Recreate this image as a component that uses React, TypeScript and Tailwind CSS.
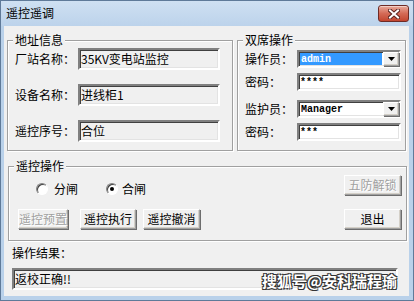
import React from 'react';

// Classic Win32-style bevels
const sunken =
  'border-2 border-t-[#808080] border-l-[#808080] border-r-white border-b-white shadow-[inset_1px_1px_0_#404040,inset_-1px_-1px_0_#e3e3e3]';
const raised =
  'border border-t-white border-l-white border-r-[#a0a0a0] border-b-[#a0a0a0] shadow-[inset_-1px_-1px_0_#d4d0c8,1px_1px_0_#6d6d6d]';
const etched =
  'border border-[#a0a0a0] shadow-[inset_1px_1px_0_#ffffff,1px_1px_0_#ffffff]';

const GroupBox = ({ title, className, children }: { title: string; className: string; children: React.ReactNode }) => (
  <div className={`relative ${etched} ${className}`}>
    <span className="absolute left-[5px] top-[-8px] bg-[#f0f0f0] px-[2px] leading-[14px]">{title}</span>
    {children}
  </div>
);

const Button = ({ label, width, disabled }: { label: string; width: string; disabled?: boolean }) => (
  <button
    className={`${width} h-[20px] ${raised} bg-[#f0f0f0] flex items-center justify-center leading-[14px] ${
      disabled ? 'text-[#a0a0a0] [text-shadow:1px_1px_0_#ffffff]' : 'text-black'
    }`}
  >
    {label}
  </button>
);

const Radio = ({ checked }: { checked?: boolean }) => (
  <span className="w-[12px] h-[12px] rounded-full border border-t-[#808080] border-l-[#808080] border-r-white border-b-white bg-white shadow-[inset_1px_1px_0_#404040] flex items-center justify-center">
    {checked && <span className="w-[4px] h-[4px] rounded-full bg-black" />}
  </span>
);

const ComboBox = ({ value, selected }: { value: string; selected?: boolean }) => (
  <div className={`w-[104px] h-[18px] ${sunken} bg-white flex items-stretch`}>
    <div className="flex-1 p-[1px] flex">
      <span
        className={`flex-1 flex items-center pl-[1px] font-['Liberation_Mono',monospace] text-[10px] font-bold ${
          selected ? 'bg-[#3399ff] text-white' : 'text-black'
        }`}
      >
        {value}
      </span>
    </div>
    <div className={`w-[16px] ${raised} bg-[#f0f0f0] flex items-center justify-center`}>
      <svg width="7" height="4" viewBox="0 0 7 4">
        <path d="M0 0h7L3.5 4z" fill="#000" />
      </svg>
    </div>
  </div>
);

const App = () => {
  return (
    <div className="relative w-[414px] h-[301px] bg-[#b9d1ea] border border-[#5f7a99] flex flex-col font-['Noto_Sans_CJK_SC','Liberation_Sans',sans-serif] text-[12px] text-black overflow-hidden">
      {/* Title bar */}
      <div className="h-[25px] flex items-start pl-[5px] bg-gradient-to-b from-[#cfe0f2] to-[#bcd3eb]">
        <span className="mt-[5px] leading-[14px]">遥控遥调</span>
        <button className="ml-auto mr-[4px] mt-[4px] w-[31px] h-[17px] rounded-[3px] border border-[#6e2b26] bg-gradient-to-b from-[#e7a99b] via-[#d46a56] to-[#c2452f] flex items-center justify-center shadow-[inset_0_1px_0_#f3cfc6]">
          <svg width="12" height="10" viewBox="0 0 12 10">
            <path d="M2 1.5l8 7M10 1.5l-8 7" stroke="#5a2420" strokeWidth="4" strokeLinecap="square" />
            <path d="M2 1.5l8 7M10 1.5l-8 7" stroke="#ffffff" strokeWidth="2" strokeLinecap="square" />
          </svg>
        </button>
      </div>

      {/* Client area */}
      <div className="h-[270px] ml-[3px] mr-[4px] bg-[#f0f0f0] flex flex-col">
        <div className="flex pl-[3px] pt-[14px] gap-[4px]">
          {/* 地址信息 */}
          <GroupBox title="地址信息" className="w-[226px] h-[111px] pt-[7px] pl-[7px] flex flex-col gap-[14px]">
            {[
              ['厂站名称：', '35KV变电站监控'],
              ['设备名称：', '进线柜1'],
              ['遥控序号：', '合位'],
            ].map(([label, value]) => (
              <div key={label} className="h-[22px] flex items-center">
                <span className="w-[63px] leading-[14px]">{label}</span>
                <div className={`w-[142px] h-[22px] ${sunken} bg-[#f0f0f0] flex items-center pl-[1px] leading-[14px]`}>
                  {value}
                </div>
              </div>
            ))}
          </GroupBox>

          {/* 双席操作 */}
          <GroupBox title="双席操作" className="w-[169px] h-[111px] pt-[9px] pl-[7px] flex flex-col">
            <div className="h-[18px] flex items-center">
              <span className="w-[52px] leading-[14px]">操作员：</span>
              <ComboBox value="admin" selected />
            </div>
            <div className="h-[18px] mt-[5px] flex items-center">
              <span className="w-[52px] leading-[14px]">密码：</span>
              <div className={`w-[104px] h-[18px] ${sunken} bg-white flex items-center pl-[1px] font-['Liberation_Mono',monospace] text-[10px] font-bold`}>
                ****
              </div>
            </div>
            <div className="h-[18px] mt-[9px] flex items-center">
              <span className="w-[52px] leading-[14px]">监护员：</span>
              <ComboBox value="Manager" />
            </div>
            <div className="h-[18px] mt-[5px] flex items-center">
              <span className="w-[52px] leading-[14px]">密码：</span>
              <div className={`w-[104px] h-[18px] ${sunken} bg-white flex items-center pl-[1px] font-['Liberation_Mono',monospace] text-[10px] font-bold`}>
                ***
              </div>
            </div>
          </GroupBox>
        </div>

        {/* 遥控操作 */}
        <GroupBox title="遥控操作" className="ml-[4px] mt-[15px] w-[399px] h-[75px] pt-[8px] pl-[9px] pr-[5px] flex flex-col">
          <div className="h-[24px] flex items-start">
            <div className="mt-[5px] h-[18px] ml-[18px] flex items-center">
              <Radio />
              <span className="ml-[6px] leading-[14px]">分闸</span>
              <span className="ml-[28px]">
                <Radio checked />
              </span>
              <span className="ml-[4px] leading-[14px]">合闸</span>
            </div>
            <div className="ml-auto">
              <Button label="五防解锁" width="w-[57px]" disabled />
            </div>
          </div>
          <div className="mt-[10px] flex items-center">
            <Button label="遥控预置" width="w-[50px]" disabled />
            <div className="ml-[12px]">
              <Button label="遥控执行" width="w-[56px]" />
            </div>
            <div className="ml-[7px]">
              <Button label="遥控撤消" width="w-[57px]" />
            </div>
            <div className="ml-auto">
              <Button label="退出" width="w-[57px]" />
            </div>
          </div>
        </GroupBox>

        <span className="ml-[8px] mt-[5px] leading-[14px]">操作结果：</span>
        <div className={`ml-[8px] mt-[8px] w-[386px] h-[22px] ${sunken} bg-[#f0f0f0] flex items-center pl-[1px] leading-[14px]`}>
          返校正确!!
        </div>
      </div>

      {/* Watermark overlay */}
      <span className="absolute left-[261px] top-[271px] text-[15px] font-bold leading-[18px] text-white [text-shadow:1px_1px_0_#333,-1px_-1px_0_#333,1px_-1px_0_#333,-1px_1px_0_#333]">
        搜狐号@安科瑞程瑜
      </span>
    </div>
  );
};

export default App;
